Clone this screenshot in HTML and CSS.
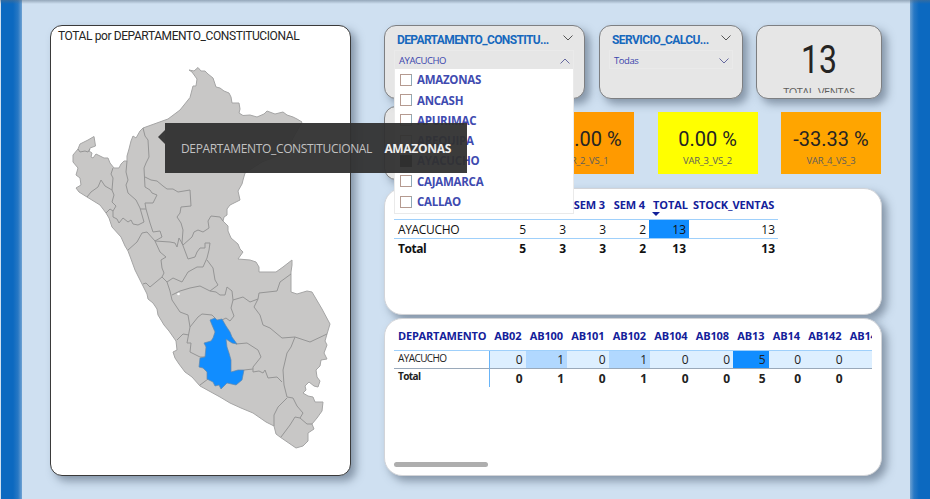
FILE: index.html
```html
<!DOCTYPE html>
<html lang="es">
<head>
<meta charset="utf-8">
<title>Ventas por departamento</title>
<link rel="stylesheet" href="styles.css">
</head>
<body>
<div class="rail left"></div>
<main class="report">
  <section class="card map-card">
    <h2 class="map-title"><span class="w-title">TOTAL por DEPARTAMENTO_CONSTITUCIONAL</span></h2>
    <svg class="map" viewBox="51 44 299 431" width="299" height="431">
      <path class="land" d="M94 136.500L95.500 146L90 148L89 151L92 153L91 157L93 158L96 154L100 156L104 158L108 158L110 163L114 168L119 168L121 164L124 161L127 161L127 156L129 149L131 141L133 136L136 138L140 131L143 128L168 119L180 110L190 97.500L193 86L196 86L197 79L192 72L189 70L194 71L198 67.500L201 71L205 71L208 74L213 78L216 87L220 88L224 91L229 93L231 97L232 103L239 103L240 109L239 113L243 115.500L250 115L257 117L264 114L267 111L275 114L283 112L287 115L293 117L297 119L302 122L292 140L280 155L262 162L245 173L243 180L242 184L238 191L240 200L230 205L227 209L227 215L224 217L223 221L228 226L228 231L231 238L238 244L240 249L243 252L238 259L250 260L256 262L259 267L259 272L276 272L283 267L292 260L292 265L291 272L291 292L297 294L307 291L312 292L322 309L330 324L327 334L325 341L327 345L324 353L327 359L321 360L320 366L316 370L317 377L320 381L318 387L314 386L309 382L305 386L306 390L303 393L308 396L313 397L315 402L323 402L322 411L317 418L312 424L314 429L308 433L308 441L303 446L296 448L280 437L276 434L274 426L266 422L253 413L241 408L230 403L220 397L200 386L192 377L185 372L179 364L175 358L173 352L177 350L176 341L169 331L164 325L158 315L157 309L153 303L148 299L147 294L143 286L139 278L135 270L131 259L128 251L125 246L121 237L112 227L109 218L106 213L100 205L87 197L79 192L76 188L81 185L80 178L76 175L78 168L73 162L73 155L78 149L80 144L88 140Z"/>
      <path class="border" d="M78 149L80 152L85 151L88 152L90 149M113 168L111 174L113 178L112 190L114 195L112 202L116 206L113 211L113 217L117 219L119 223L123 218L128 222L131 220L133 224L138 225L144 222L140 208L136 200L128 193L126 185L128 180L126 172L127 161M87 197L91 192L98 187L101 180L105 186L112 190M106 213L110 209L113 211M143 128L145 136L148 140L149 157L146 163L144 168L145 187L150 190L152 193L157 195L153 203L145 203L146 209L140 209M145 177L151 180L157 181L163 186L167 189L173 189L178 192L190 190L191 206L181 207L180 213L177 217L181 223L183 230L182 243L188 259L195 257L197 252L200 248L205 248L205 243L210 243L209 250L207 258L203 267L197 267L188 272L182 282L173 278L167 282L162 277L150 287L146 283L143 284M146 209L150 223L153 232L160 231L162 237L155 241L170 242L175 243L177 247L179 238L183 245L192 237L194 232L198 230L203 232L209 228L208 221L211 216L220 217L223 221M128 250L137 242L142 233L147 232L155 241L160 252L166 257L161 260L162 268L164 273L162 277M167 282L170 291L172 300L180 312L188 315L190 327L198 317L202 314L212 315L215 318M172 295L180 291L190 288L200 286L210 291L218 285L215 280L213 268L207 260M210 291L216 292L220 295L225 295L227 287L232 291L233 300L243 297L250 302L258 299L259 293L277 291L280 282L291 274M258 299L254 307L260 315L263 325L270 328L282 338L295 337L310 342L327 334M233 300L231 308L234 316L230 321L226 318L222 320M190 327L187 343L191 343L190 352L200 357L205 357M177 340L183 334L189 335M295 337L291 347L287 353L283 370L284 385L287 397L293 398L297 406L303 413L300 418L295 417L290 425L281 437M287 398L278 407L274 415L274 426M300 418L307 424L312 424M236 344L247 343L258 350L261 357L253 367L253 372L259 371L263 373L265 370L268 378L277 377L282 382M244 370L253 369M200 385L208 379"/>
      <path class="selected" d="M210 320L215 318L217 320L222 319L226 326L230 332L232 337L237 344L232 343L226 339L227 347L229 353L231 360L231 372L238 370L244 370L242 380L236 385L227 383L221 389L219 385L215 386L213 382L207 379L207 372L203 368L199 367L200 358L205 357L206 347L204 343L211 341L213 338L215 332L212 325Z"/>
      <circle class="lake" cx="178.500" cy="294" r="1.300"/>
    </svg>
  </section>

  <div class="side">
    <div class="row filters">
      <section class="card slicer wide">
        <header><span class="name w-dep">DEPARTAMENTO_CONSTITU...</span><svg class="chev" viewBox="0 0 10 6"><path d="M.5.500L5 5L9.500.500"/></svg></header>
        <div class="pick"><span>AYACUCHO</span><svg class="chev" viewBox="0 0 10 6"><path d="M.5 5.500L5 1L9.500 5.500"/></svg></div>
        <ul class="options">
          <li><i class="box"></i><span>AMAZONAS</span></li>
          <li><i class="box"></i><span>ANCASH</span></li>
          <li><i class="box"></i><span>APURIMAC</span></li>
          <li><i class="box"></i><span>AREQUIPA</span></li>
          <li><i class="box on"></i><span>AYACUCHO</span></li>
          <li><i class="box"></i><span>CAJAMARCA</span></li>
          <li><i class="box"></i><span>CALLAO</span></li>
        </ul>
      </section>
      <section class="card slicer narrow">
        <header><span class="name w-serv">SERVICIO_CALCU...</span><svg class="chev" viewBox="0 0 10 6"><path d="M.5.500L5 5L9.500.500"/></svg></header>
        <div class="pick"><span>Todas</span><svg class="chev" viewBox="0 0 10 6"><path d="M.5.500L5 5L9.500.500"/></svg></div>
      </section>
      <section class="card total">
        <div class="big">13</div>
        <div class="caption">TOTAL_VENTAS</div>
      </section>
    </div>

    <div class="row kpis">
      <section class="card blank"></section>
      <section class="kpi k1"><b>-40.00 %</b><span>VAR_2_VS_1</span></section>
      <section class="kpi k2"><b>0.00 %</b><span>VAR_3_VS_2</span></section>
      <section class="kpi k3"><b>-33.33 %</b><span>VAR_4_VS_3</span></section>
    </div>

    <section class="card panel weeks">
      <table class="t1">
        <colgroup><col class="c135"><col class="c40"><col class="c40"><col class="c40"><col class="c40"><col class="c89"></colgroup>
        <thead><tr><th></th><th></th><th>SEM 3</th><th>SEM 4</th><th class="sorted">TOTAL</th><th>STOCK_VENTAS</th></tr></thead>
        <tbody>
          <tr><td><div class="first"><span>AYACUCHO</span><span>5</span></div></td><td>3</td><td>3</td><td>2</td><td class="hot">13</td><td>13</td></tr>
          <tr class="sum"><td><div class="first"><span>Total</span><span>5</span></div></td><td>3</td><td>3</td><td>2</td><td>13</td><td>13</td></tr>
        </tbody>
      </table>
    </section>

    <section class="card panel codes">
      <div class="clip">
      <table class="t2">
        <colgroup><col class="c95"><col class="c36"><col class="c42"><col class="c42"><col class="c42"><col class="c42"><col class="c42"><col class="c36"><col class="c36"><col class="c42"><col class="c42"></colgroup>
        <thead><tr><th>DEPARTAMENTO</th><th>AB02</th><th>AB100</th><th>AB101</th><th>AB102</th><th>AB104</th><th>AB108</th><th>AB13</th><th>AB14</th><th>AB142</th><th>AB143</th></tr></thead>
        <tbody>
          <tr><td class="lead">AYACUCHO</td><td>0</td><td class="mid">1</td><td>0</td><td class="mid">1</td><td>0</td><td>0</td><td class="hot">5</td><td>0</td><td>0</td><td></td></tr>
          <tr class="sum"><td class="lead">Total</td><td>0</td><td>1</td><td>0</td><td>1</td><td>0</td><td>0</td><td>5</td><td>0</td><td>0</td><td></td></tr>
        </tbody>
      </table>
      </div>
      <div class="scroll"></div>
    </section>
  </div>
</main>
<div class="rail right"></div>
<div class="tooltip"><span class="key">DEPARTAMENTO_CONSTITUCIONAL</span><span class="val">AMAZONAS</span></div>
</body>
</html>
```
FILE: styles.css
```css
* { box-sizing: border-box; }
body {
  margin: 0; width: 930px; height: 499px; overflow: hidden; position: relative;
  display: flex; background: #cfe0f1;
  font-family: "Open Sans", "Noto Sans", sans-serif; font-size: 12px; color: #252423;
}
body::before {
  content: ""; position: absolute; left: 0; top: 0; width: 930px; height: 4px;
  background: linear-gradient(rgba(90,110,130,.5), rgba(90,110,130,0));
}
.rail { width: 22px; flex: none; }
.rail.left { background: linear-gradient(90deg, #cfe0f1 0 1px, #0c69c0 1px 13px, #2878c4 18px, #6fa2d3 22px); }
.rail.right { width: 20px; background: linear-gradient(90deg, #6fa2d3 0, #2878c4 4px, #0c69c0 9px); }
.report { width: 888px; display: flex; padding: 25px 28px 0; gap: 33px; }
.card { border-radius: 12px; box-shadow: 5px 5px 8px rgba(60,75,95,.5); background: #e6e6e6; border: 1px solid #7d7f82; }
.map-card { width: 301px; height: 451px; background: #fff; border-color: #3a3a3a; flex: none; }
.map-title { margin: 0; padding-left: 7px; height: 18px; font: 400 12px/20px Roboto, sans-serif; white-space: nowrap; color: #252423; }
.w-title { letter-spacing: -.4px; }
.map { display: block; }
.land { fill: #c8c7c6; stroke: #a5a5a5; stroke-width: 1; stroke-linejoin: round; }
.border { fill: none; stroke: #959595; stroke-width: 1; stroke-linejoin: round; }
.selected { fill: #118dff; stroke: #6188ac; stroke-width: .7; }
.lake { fill: #fff; }

.side { width: 498px; flex: none; }
.row { display: flex; }
.filters { gap: 14px; height: 74px; }
.slicer { position: relative; padding: 4px 9px 0; }
.wide { width: 201px; flex: none; z-index: 3; }
.narrow { width: 144px; flex: none; }
.slicer header { height: 20px; display: flex; align-items: center; justify-content: space-between; padding: 0 2px 0 3px; }
.name { font: 700 12px/18px Roboto, sans-serif; color: #1768bd; white-space: nowrap; }
.w-dep { letter-spacing: -.62px; }
.w-serv { letter-spacing: -.57px; }
.chev { width: 10px; height: 6px; fill: none; stroke: #555; stroke-width: 1; flex: none; }
.slicer header .chev { margin-top: -4px; }
.pick { height: 19px; width: 180px; border: 1px solid #eaeaea; border-bottom: 0; display: flex; align-items: center; justify-content: space-between; padding: 1px 3px 0 4px; font-size: 9.500px; color: #3a45ad; letter-spacing: -.45px; }
.narrow .pick { width: 124px; padding-top: 2px; border-bottom: 1px solid #eaeaea; }
.pick .chev { stroke: #66699f; }
.options { position: absolute; left: 9px; top: 43px; width: 180px; height: 145px; margin: 0; padding: .6px 5px 0; list-style: none; background: #fff; border: 1px solid #eaeaea; border-top: 0; }
.options li { height: 20.300px; display: flex; align-items: center; gap: 5px; font-weight: 700; font-size: 11.500px; color: #3f4bb0; letter-spacing: -.25px; }
.box { width: 12px; height: 12px; border: 1px solid #b59a90; border-right-color: #8faab8; background: #fff; flex: none; }
.box.on { background: #222; border-color: #222; }
.total { width: 126px; flex: none; margin-left: -1px; padding-top: 9px; height: 74px; text-align: center; }
.big { font: 400 39px/51px Roboto, sans-serif; height: 50px; transform: scaleX(.82); }
.caption { height: 8px; overflow: hidden; line-height: 14px; font-size: 11px; color: #605e5c; letter-spacing: -.55px; }

.kpis { height: 62px; margin-top: 13px; }
.blank { width: 130px; height: 74px; margin-top: -6px; flex: none; }
.kpi { width: 100px; height: 62px; flex: none; margin-left: 23.500px; text-align: center; }
.kpi.k1 { margin-left: 20px; background: #ff9a00; }
.k2 { background: #ffff00; }
.k3 { background: #ffa500; }
.kpi b { display: block; margin-top: 13px; font: 400 20px/28px Roboto, sans-serif; white-space: nowrap; }
.kpi span { display: block; font-size: 9.500px; line-height: 16px; color: #605e5c; letter-spacing: -.3px; }

.panel { background: #fff; border-color: #d2d4d8; border-radius: 18px; overflow: hidden; }
.weeks { margin-top: 14px; height: 127px; padding: 7px 9px; }
.codes { margin-top: 3px; height: 158px; padding: 8px 9px 0; }
table { border-collapse: separate; border-spacing: 0; table-layout: fixed; }
.t1 { width: 384px; }
.t2 { width: 493px; }
.clip { width: 478px; height: 135px; overflow: hidden; }
.c135 { width: 135px; } .c40 { width: 40px; } .c89 { width: 89px; }
.c95 { width: 96px; } .c36 { width: 35.500px; } .c42 { width: 41.500px; }
th, td { padding: 0 4px; text-align: right; white-space: nowrap; line-height: 17px; }
th { font-weight: 700; font-size: 11px; color: #13209a; letter-spacing: -.1px; border-bottom: 1px solid #9fd0fb; }
.t1 th { height: 24px; padding: 0 4px 6px; }
.t1 td { height: 19px; border-bottom: 1px solid #9fd0fb; color: #111; padding-right: 3px; }
.first { display: flex; justify-content: space-between; }
.first span:first-child { letter-spacing: -.35px; }
tr.sum td { border-bottom: 0; font-weight: 700; }
.sum .first span:first-child { letter-spacing: -.45px; }
.t1 .sum td { height: 18px; }
.sorted { position: relative; }
.sorted::after { content: ""; position: absolute; left: 3px; bottom: 3px; border: 4px solid transparent; border-top-color: #13209a; border-bottom: 0; }
td.hot { background: #118dff; }
.t2 th { height: 24px; padding: 0 4px 6px; }
.t2 td { height: 18px; background: #ddefff; border-bottom: 1px solid #9aa9ba; color: #222; padding-right: 3px; }
.t2 th:first-child { text-align: left; letter-spacing: -.2px; }
.t2 td.mid { background: #b1d8ff; }
.t2 td.hot { background: #118dff; }
.t2 td.lead { text-align: left; background: #fff; border-right: 1px solid #68b4f8; font-size: 10px; line-height: 15px; letter-spacing: -.6px; vertical-align: top; }
.t2 .sum td { background: #fff; border-bottom: 0; }
.scroll { width: 94px; height: 5px; border-radius: 3px; background: #aeaeae; }

.tooltip { position: absolute; z-index: 10; left: 165px; top: 123px; width: 302px; height: 50px; padding: 0 16px; display: flex; align-items: center; justify-content: space-between; background: rgba(48,48,48,.95); color: #c2c2c2; white-space: nowrap; }
.tooltip::before { content: ""; position: absolute; left: -7px; top: 7px; border: 7px solid transparent; border-left: 0; border-right-color: #3a3a3a; }
.key { letter-spacing: -.35px; }
.val { font-weight: 700; color: #eee; letter-spacing: -.3px; }
```
